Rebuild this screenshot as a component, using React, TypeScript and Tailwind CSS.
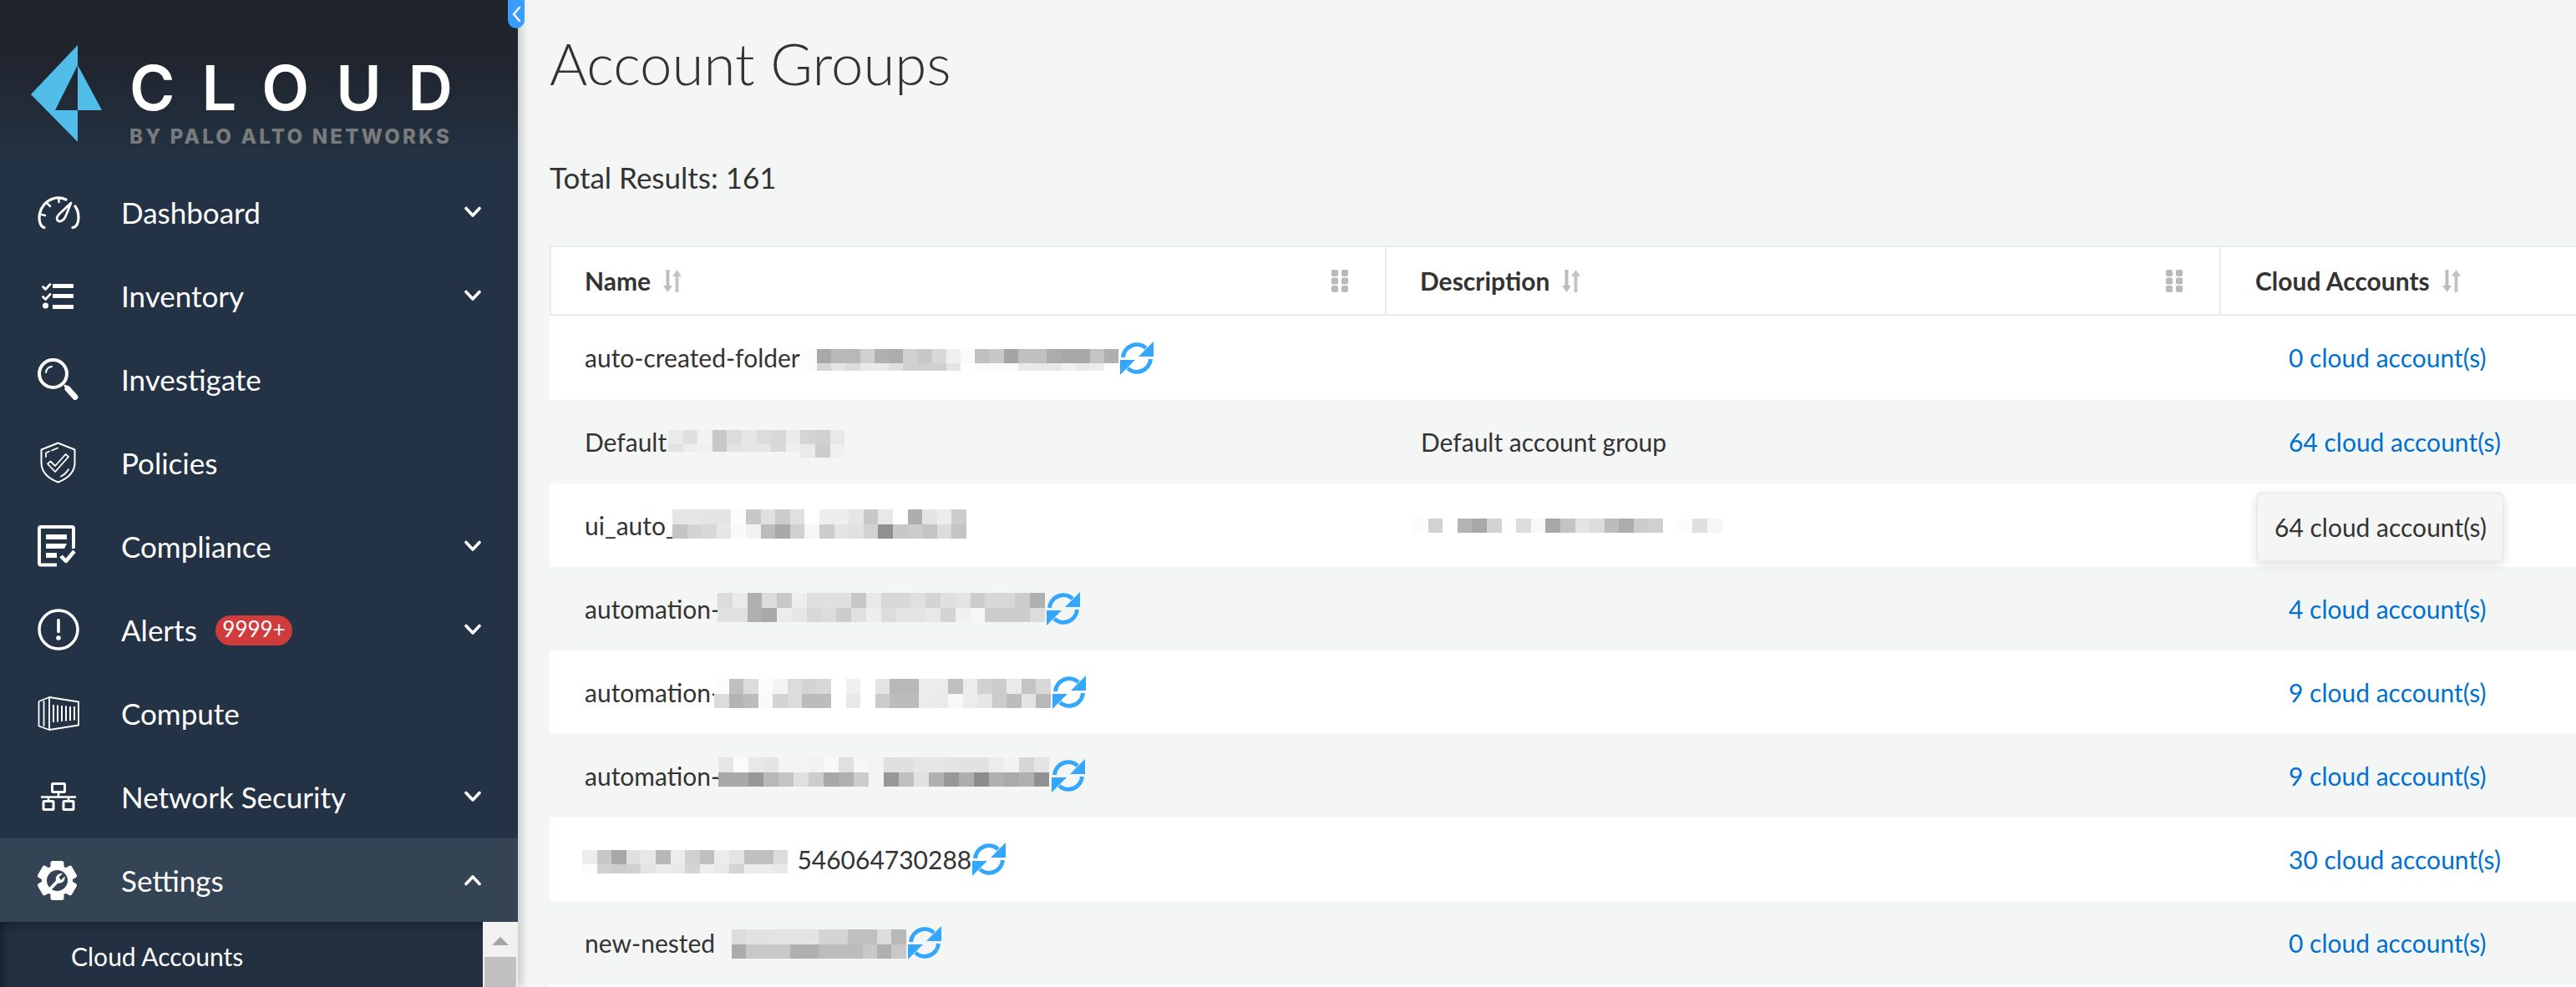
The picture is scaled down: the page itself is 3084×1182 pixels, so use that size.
import React from "react";

const LATO = "font-['Lato',sans-serif]";

type BlurRow = [number, string];

function Blur({ rows, pitch = 17.6, className = "" }: { rows: BlurRow[]; pitch?: number; className?: string }) {
  const n = Math.max(...rows.map((r) => r[1].split(" ").length));
  const h = rows.reduce((a, r) => a + r[0], 0);
  let y = 0;
  return (
    <svg width={n * pitch} height={h} className={"shrink-0 block relative " + className} shapeRendering="crispEdges">
      {rows.map((r, i) => {
        const top = y;
        y += r[0];
        return r[1].split(" ").map((v, j) =>
          v === "--" ? null : <rect key={i + "-" + j} x={j * pitch} y={top} width={pitch} height={r[0]} fill={"#" + v + v + v} />
        );
      })}
    </svg>
  );
}

function Refresh({ className = "" }: { className?: string }) {
  return (
    <svg width="40" height="40" viewBox="0 0 40 40" className={"shrink-0 " + className}>
      <path d="M3.500 19A16.500 16.500 0 0 1 31 8M36.500 21A16.500 16.500 0 0 1 9 32" fill="none" stroke="#33a6fd" strokeWidth="5" />
      <path d="M40 0V18H22zM0 40V22H18z" fill="#33a6fd" />
    </svg>
  );
}

function SortIcon() {
  return (
    <svg width="22" height="27" viewBox="0 0 22 27" className="shrink-0">
      <path d="M3.500 0h4v19H11l-5.500 8L0 19h3.500z" fill="#bdbdbd" />
      <path d="M14.500 27h4V8H22L16.500 0 11 8h3.500z" fill="#c4c4c4" />
    </svg>
  );
}

function Handle() {
  return (
    <svg width="20" height="27" viewBox="0 0 20 27" className="shrink-0">
      {[0, 9.5, 19].map((y) =>
        [0, 12].map((x) => <rect key={x + "-" + y} x={x} y={y} width="8" height="8" rx="2" fill="#b9b9b9" />)
      )}
    </svg>
  );
}

function Chevron({ up = false }: { up?: boolean }) {
  return (
    <svg width="20" height="14" viewBox="0 0 20 14" className="absolute right-[44px] top-[43px]">
      <path d={up ? "M2 11.500L10 3l8 8.500" : "M2 2.500L10 11l8-8.500"} fill="none" stroke="#fff" strokeWidth="3.600" strokeLinecap="round" strokeLinejoin="round" />
    </svg>
  );
}

const s = { fill: "none", stroke: "#fff", strokeLinecap: "round", strokeLinejoin: "round" } as const;

const icons: Record<string, React.ReactNode> = {
  dashboard: (
    <svg width="51" height="39" viewBox="0 0 51 39">
      <g {...s} strokeWidth="3.200">
        <path d="M8 37.500C4 37 2 31 2 26 2 14 10 5 20 2.500" />
        <path d="M22 2C26 1.500 30 2 34 4" />
        <path d="M42 37.500C47 37 49 31 49 26 49 20 48 16 45 12" />
        <path d="M25.500 2v5M12 9l3 3M5 22l4 1" strokeWidth="2.500" />
        <path d="M40 8L34 23c-1.500 4-4 6.500-7 7-3 .5-4.500-2-3.500-5 1-2.500 3-4.500 6-7z" strokeWidth="2.800" />
      </g>
    </svg>
  ),
  inventory: (
    <svg width="38" height="31" viewBox="0 0 38 31">
      <g fill="#fff">
        <rect x="13" y="1" width="25" height="5" />
        <rect x="13" y="13" width="25" height="5" />
        <rect x="13" y="26" width="25" height="5" />
        <circle cx="4.500" cy="27" r="3.500" />
      </g>
      <g {...s} strokeWidth="2.800">
        <path d="M1.500 4.500L4.500 7.500 10 1.500M1.500 16.500L4.500 19.500 10 13.500" />
      </g>
    </svg>
  ),
  investigate: (
    <svg width="50" height="50" viewBox="0 0 50 50">
      <g {...s}>
        <circle cx="18.500" cy="18.500" r="16.500" strokeWidth="4" />
        <path d="M10 17C10.500 13 13 10.500 17 10" strokeWidth="2" />
        <path d="M33 33l3 3" strokeWidth="3" />
        <path d="M36 36.500l9 10" strokeWidth="7" />
      </g>
    </svg>
  ),
  policies: (
    <svg width="43" height="50" viewBox="0 0 43 50">
      <g {...s} strokeWidth="2">
        <path d="M21.500 1.500L41.500 9.500V25C41.500 36 33 44 21.500 48.500 10 44 1.500 36 1.500 25V9.500z" />
        <path d="M14 10.500L21 7.500M7 18v-4.500l4-2" strokeWidth="1.800" />
        <path d="M25 41.500c4-2 7-5 9-8.500" strokeWidth="1.800" />
        <path d="M9 26.500l9 9.500L34 18l-3.500-3-12.500 14-5.500-5.500z" strokeWidth="1.800" />
      </g>
    </svg>
  ),
  compliance: (
    <svg width="47" height="50" viewBox="0 0 47 50">
      <path d="M23 47.500H4c-1.500 0-2-.5-2-2V4c0-1.500.5-2 2-2h37c1.500 0 2 .5 2 2v24" fill="none" stroke="#fff" strokeWidth="4" />
      <g fill="#fff">
        <rect x="10" y="11" width="25" height="6" />
        <path d="M10 22h25l-3 6H10z" />
        <rect x="10" y="33" width="13" height="6" />
      </g>
      <path d="M28 37l6 6 10-12" {...s} strokeWidth="4.500" strokeLinecap="butt" />
    </svg>
  ),
  alerts: (
    <svg width="50" height="50" viewBox="0 0 50 50">
      <circle cx="25" cy="25" r="23" fill="none" stroke="#fff" strokeWidth="3.500" />
      <rect x="23.200" y="12" width="3.600" height="17" rx="1.500" fill="#fff" />
      <circle cx="25" cy="35" r="2.800" fill="#fff" />
    </svg>
  ),
  compute: (
    <svg width="50" height="41" viewBox="0 0 50 41">
      <g {...s} strokeWidth="1.800">
        <path d="M14 1L49 6.500V34.500L14 40 1.500 35.500V6z" />
        <path d="M14 1V40M7.500 6V35" />
      </g>
      <g stroke="#fff" strokeWidth="2">
        <path d="M19 10V31M24 10.500V30.500M29 11V30M34 11.500V29.500M39 12V29M44 12V28.500" />
      </g>
    </svg>
  ),
  network: (
    <svg width="42" height="34" viewBox="0 0 42 34">
      <g fill="none" stroke="#fff">
        <rect x="13.500" y="1.500" width="15" height="10" rx="1" strokeWidth="3" />
        <path d="M21 12v6M0 17.500h42" strokeWidth="2.500" />
        <path d="M9 18v4M33 18v4" strokeWidth="2.500" />
        <rect x="3" y="22.500" width="12" height="10" rx="1" strokeWidth="3" />
        <rect x="27" y="22.500" width="12" height="10" rx="1" strokeWidth="3" />
      </g>
    </svg>
  ),
  settings: (
    <svg width="47" height="47" viewBox="0 0 47 47">
      <g fill="#fff">
        <circle cx="23.500" cy="23.500" r="18.500" />
        {[0, 60, 120, 180, 240, 300].map((a) => (
          <rect key={a} x="15.500" y="0" width="16" height="10" rx="2.500" transform={`rotate(${a} 23.500 23.500)`} />
        ))}
      </g>
      <circle cx="23.500" cy="23.500" r="12.500" fill="#344455" />
      <path d="M13 33L22 23.500C21 19 24 14.500 30 15L25.500 19.500 28 23 32.500 18.500C33.500 24 29 27.500 24.500 26.500L16 35z" fill="#fff" />
    </svg>
  ),
};

const nav: { icon: string; label: string; chevron?: boolean; badge?: boolean; active?: boolean; w: string }[] = [
  { icon: "dashboard", label: "Dashboard", chevron: true, w: "pl-[45px]" },
  { icon: "inventory", label: "Inventory", chevron: true, w: "pl-[50px]" },
  { icon: "investigate", label: "Investigate", w: "pl-[45px]" },
  { icon: "policies", label: "Policies", w: "pl-[48px]" },
  { icon: "compliance", label: "Compliance", chevron: true, w: "pl-[45px]" },
  { icon: "alerts", label: "Alerts", chevron: true, badge: true, w: "pl-[45px]" },
  { icon: "compute", label: "Compute", w: "pl-[45px]" },
  { icon: "network", label: "Network Security", chevron: true, w: "pl-[49px]" },
  { icon: "settings", label: "Settings", active: true, w: "pl-[45px]" },
];

function Sidebar() {
  return (
    <aside className="relative w-[620px] h-[1182px] shrink-0 bg-[#233345] shadow-[4px_0_10px_rgba(0,0,0,0.2)] z-10 flex flex-col">
      <div className="h-[204px] shrink-0 bg-gradient-to-b from-[#20242d] from-[30%] to-[#233345] relative flex">
        <svg width="86" height="118" viewBox="37 53 86 118" className="ml-[37px] mt-[53px] shrink-0">
          <path d="M93 54L37 113l56 57V132H66L93 78z" fill="#52bde8" />
          <path d="M93 78l29 54H93z" fill="#52bde8" />
        </svg>
        <div className="ml-[32px] flex flex-col font-['Inter',sans-serif]">
          <div className="text-[74px] leading-none font-semibold text-white tracking-[32px] mt-[68px] whitespace-nowrap">CLOUD</div>
          <div className="text-[24px] leading-none font-extrabold text-[#7a7b7c] tracking-[3.2px] mt-[10px] whitespace-nowrap">BY PALO ALTO NETWORKS</div>
        </div>
      </div>
      {nav.map((n) => (
        <div key={n.label} className={"relative h-[100px] shrink-0 flex items-center " + n.w + (n.active ? " bg-[#344455]" : "")}>
          <div className="shrink-0">{icons[n.icon]}</div>
          <span className={"absolute left-[145px] top-[30px] text-[35px] leading-[40px] text-white whitespace-nowrap " + LATO}>{n.label}</span>
          {n.badge && (
            <span className={"absolute left-[258px] top-[33px] h-[36px] w-[92px] rounded-[18px] bg-[#d03c3c] text-white text-[26px] leading-[32px] text-center " + LATO}>9999+</span>
          )}
          {n.chevron && <Chevron />}
          {n.active && <Chevron up />}
        </div>
      ))}
      <div className="relative flex-1 min-h-0 flex bg-[#223042] shadow-[inset_0_12px_12px_-8px_rgba(0,0,0,0.3),inset_12px_0_12px_-8px_rgba(0,0,0,0.3)]">
        <div className={"flex-1 pl-[85px] pt-[23px] text-[30px] leading-[36px] text-white " + LATO}>Cloud Accounts</div>
        <div className="w-[42px] bg-[#f1f1f1] flex flex-col items-center pt-[18px]">
          <div className="w-0 h-0 border-l-[10px] border-r-[10px] border-b-[10px] border-l-transparent border-r-transparent border-b-[#a3a3a3]" />
          <div className="mt-[14px] w-[38px] flex-1 bg-[#c1c1c1]" />
        </div>
      </div>
      <button className="absolute left-[608px] top-0 w-[20px] h-[34px] rounded-b-[10px] bg-[#3a9dfb] flex items-center justify-center">
        <svg width="12" height="20" viewBox="0 0 12 20">
          <path d="M10 2L3 10l7 8" fill="none" stroke="#fff" strokeWidth="2.400" strokeLinecap="round" strokeLinejoin="round" />
        </svg>
      </button>
    </aside>
  );
}

function HeaderCell({ label, handle, width, pad }: { label: string; handle?: boolean; width: string; pad: string }) {
  return (
    <div className={"h-full shrink-0 flex items-center " + pad + " " + width + (handle ? " border-r-2 border-[#e9ecea]" : "")}>
      <span className="text-[30px] font-bold text-[#333] whitespace-nowrap">{label}</span>
      <span className="ml-[15px]"><SortIcon /></span>
      {handle && <span className="ml-auto mr-[44px]"><Handle /></span>}
    </div>
  );
}

function Row({ odd, name, desc, link, tooltip, tall }: { odd: boolean; name: React.ReactNode; desc?: React.ReactNode; link: string; tooltip?: boolean; tall?: boolean }) {
  return (
    <div className={"shrink-0 flex items-center text-[30px] text-[#333] " + (tall ? "h-[101px] " : "h-[100px] ") + (odd ? "bg-white" : "bg-[#f4f6f5]")}>
      <div className="w-[1002px] shrink-0 pl-[42px] flex items-center h-full">{name}</div>
      <div className="w-[1001px] shrink-0 pl-[41px] flex items-center h-full">{desc}</div>
      <div className="relative flex-1 pl-[79px] flex items-center h-full">
        {tooltip ? (
          <div className="absolute left-[40px] top-[10px] w-[297px] h-[84px] rounded-[8px] border-2 border-[#ebedec] bg-[#f4f6f5] shadow-[0_4px_12px_rgba(0,0,0,0.12)] flex items-center pl-[20px] text-[#333] whitespace-nowrap">
            {link}
          </div>
        ) : (
          <span className="text-[#0070d1] whitespace-nowrap">{link}</span>
        )}
      </div>
    </div>
  );
}

export default function App() {
  return (
    <div className={"w-[3084px] h-[1182px] overflow-hidden flex bg-[#f4f6f5] text-[#333] " + LATO}>
      <Sidebar />
      <main className="flex-1 min-w-0 pl-[38px] flex flex-col">
        <h1 className="text-[69px] leading-[80px] font-light mt-[36px] text-[#333] whitespace-nowrap">Account Groups</h1>
        <div className="text-[35px] leading-[40px] mt-[76px] whitespace-nowrap">Total Results: 161</div>
        <div className="mt-[62px] flex flex-col">
          <div className="h-[84px] bg-white border-y-2 border-l-2 border-[#e9ecea] flex items-center">
            <HeaderCell label="Name" handle width="w-[1000px]" pad="pl-[40px]" />
            <HeaderCell label="Description" handle width="w-[999px]" pad="pl-[40px]" />
            <HeaderCell label="Cloud Accounts" width="flex-1" pad="pl-[41px]" />
          </div>
          <Row
            odd
            tall
            name={<><span className="w-[261px] whitespace-nowrap">auto-created-folder</span><Blur pitch={17.2} className="mt-[5px]" rows={[[17, "fc a8 b8 b8 d0 b0 ac d0 c8 d8 f0 fa c0 c8 a4 c0 c0 ac a8 a8 c4 b0"], [9, "fc d4 e4 dc ea ea e0 d0 d0 d0 e4 ff fa fa fc ea e8 e8 f0 ea ec ff"]]} /><Refresh className="ml-[2px]" /></>}
            link="0 cloud account(s)"
          />
          <Row
            odd={false}
            name={<><span className="w-[100px] whitespace-nowrap">Default</span><Blur className="mt-[5px]" rows={[[17, "ea e0 f2 c8 dc e6 dc d8 ea d4 d0 e8"], [9, "e2 ee f0 c8 e2 e6 e6 d8 ee ea cc f0"], [7, "-- -- -- -- -- -- -- -- -- ea cc f0"]]} /></>}
            desc="Default account group"
            link="64 cloud account(s)"
          />
          <Row
            odd
            name={<><span className="w-[105px] whitespace-nowrap">ui_auto_</span><Blur className="mt-[-3px]" rows={[[18, "e6 e6 e4 e4 fc c8 e0 cc e0 ff ee ee e6 c8 e8 ff ae e4 ec cc"], [17, "c4 d4 d8 e6 fa f2 bc a8 d0 f6 cc e4 e2 d2 90 c8 cc c4 dc c4"]]} /></>}
            desc={<Blur className="-ml-[9px] mt-[1px]" rows={[[17, "fc d2 ff b4 a8 d2 fe dc f8 a8 c4 e4 dc bc ac cc d0 ff fc e0 f6"]]} />}
            link="64 cloud account(s)"
            tooltip
          />
          <Row
            odd={false}
            name={<><span className="w-[159px] whitespace-nowrap">automation-</span><Blur pitch={17.8} className="mt-[-3px]" rows={[[18, "dc ea b0 dc c8 ee e0 e0 e0 c8 e8 d8 d8 e0 d4 e0 e4 cc d8 d8 cc b0"], [17, "e0 e0 b0 a8 ec e6 d8 dc cc e0 ee dc e4 e4 e8 d4 f0 f6 cc cc cc dc"]]} /><Refresh className="ml-[2px]" /></>}
            link="4 cloud account(s)"
          />
          <Row
            odd
            name={<><span className="w-[155px] whitespace-nowrap">automation-</span><Blur pitch={17.5} className="mt-[3px]" rows={[[18, "fc c0 dc fc f4 dc d4 d8 ff f0 ff e4 b8 b8 ec ec c0 ec d2 cc ea c4 d8"], [17, "dc b4 bc fa d4 dc bc bc ff e8 ff cc bc bc ec ea f8 ec e6 cc bc e4 b8"]]} /><Refresh className="ml-[2px]" /></>}
            link="9 cloud account(s)"
          />
          <Row
            odd={false}
            name={<><span className="w-[160px] whitespace-nowrap">automation-</span><Blur pitch={18} className="mt-[-9px]" rows={[[18, "e6 fa e8 e4 f4 f4 f2 f8 e0 f6 f4 e0 e0 e6 e6 e4 e2 e2 ec f2 d6 e4"], [17, "a8 a8 98 b8 c4 e0 cc a8 b0 cc f4 98 c0 e2 b0 98 ae 8c b0 aa b0 90"]]} /><Refresh className="ml-[3px]" /></>}
            link="9 cloud account(s)"
          />
          <Row
            odd
            name={<><Blur className="-ml-[3px] mt-[6px]" rows={[[17, "ec c8 a8 e0 e8 b8 ec d0 c0 ec e4 c0 c0 dc"], [11, "fc d0 cc d0 e4 ec e8 d4 ee e8 d4 ec ec e8"]]} /><span className="ml-[11px]">546064730288</span><Refresh className="ml-[1px]" /></>}
            link="30 cloud account(s)"
          />
          <Row
            odd={false}
            name={<><span className="w-[176px] whitespace-nowrap">new-nested</span><Blur className="mt-[3px]" rows={[[18, "dc e2 e2 e4 e4 e4 d4 d4 c0 c0 dc b8"], [17, "ac c8 c8 c8 b0 b0 bc bc bc c8 b0 c8"]]} pitch={17.4} /><Refresh className="ml-[2px]" /></>}
            link="0 cloud account(s)"
          />
          <div className="h-[100px] bg-white" />
        </div>
      </main>
    </div>
  );
}
